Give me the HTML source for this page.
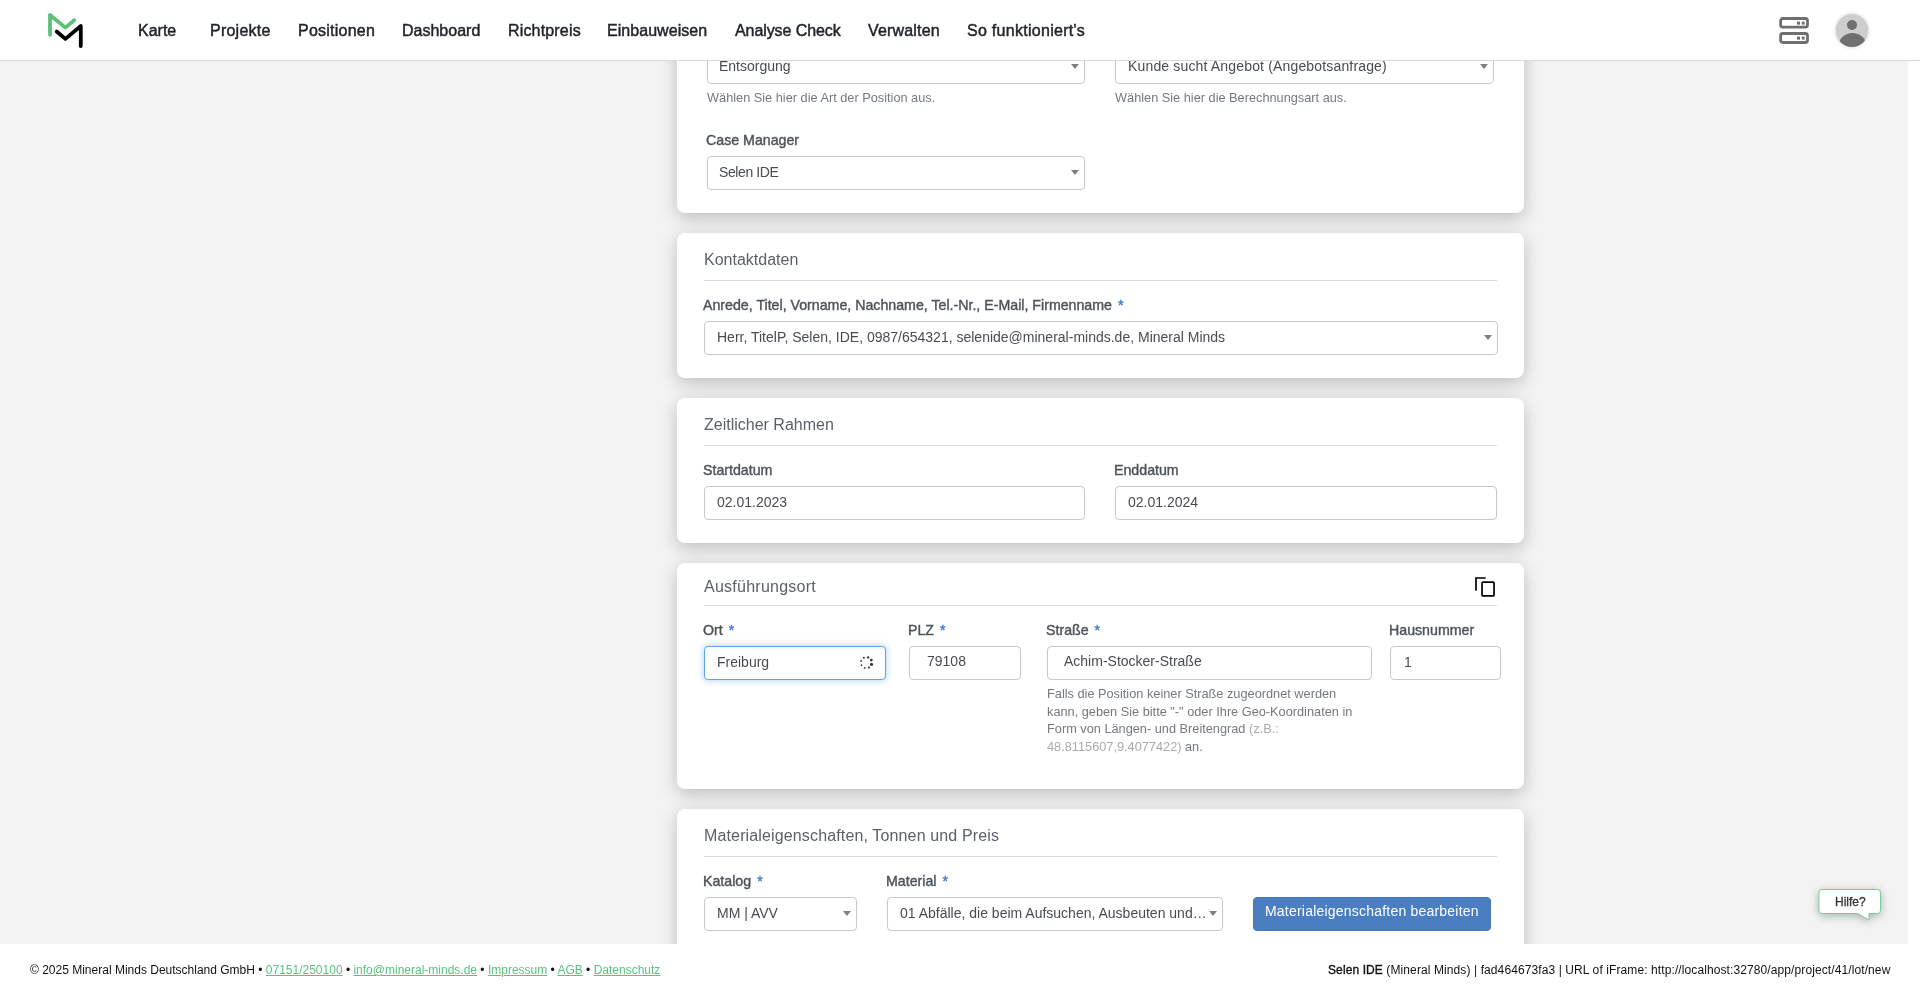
<!DOCTYPE html>
<html><head><meta charset="utf-8">
<style>
*{box-sizing:border-box;margin:0;padding:0}
html,body{width:1920px;height:994px;overflow:hidden;background:#fff;font-family:"Liberation Sans",sans-serif}
.abs{position:absolute}
#bg{position:absolute;left:0;top:61px;width:1908px;height:883px;background:#f3f3f3}
#nav{position:absolute;left:0;top:0;width:1920px;height:61px;background:#fff;border-bottom:1px solid #d9d9d9;z-index:5}
.nl{position:absolute;top:21px;font-size:16px;color:#212529;-webkit-text-stroke:0.45px #212529;white-space:nowrap;line-height:19px}
.card{position:absolute;left:677px;width:847px;background:#fff;border-radius:8px;box-shadow:0 5px 18px rgba(0,0,0,0.22)}
.hd{position:absolute;font-size:16px;color:#5b6168;white-space:nowrap;line-height:19px}
.hr{position:absolute;height:1px;background:#dcdcdc}
.lb{position:absolute;font-size:14.2px;color:#4d535a;-webkit-text-stroke:0.4px #4d535a;white-space:nowrap;line-height:17px}
.req{color:#3d7bd1;-webkit-text-stroke:0.4px #3d7bd1;margin-left:6px}
.in{position:absolute;height:34px;border:1px solid #c8c8c8;border-radius:4px;background:#fff}
.tx{position:absolute;font-size:14px;color:#484c51;white-space:nowrap;line-height:17px}
.arr{position:absolute;width:0;height:0;border-left:4px solid transparent;border-right:4px solid transparent;border-top:5px solid #808080}
.help{position:absolute;font-size:12.75px;color:#74797f;white-space:nowrap;line-height:17px}
#foot{position:absolute;left:0;top:944px;width:1920px;height:50px;background:#fff;z-index:5}
.ft{position:absolute;top:963px;font-size:12px;color:#111;white-space:nowrap;line-height:14px;z-index:6}
.ft a{color:#5fbf7f;text-decoration:underline}
.nl,.hd,.lb,.tx,.help,.ft{will-change:transform}</style></head>
<body>
<div id="bg"></div>

<!-- card 1 -->
<div class="card" style="top:-150px;height:363px"></div>
<div class="in" style="left:707px;top:50px;width:378px"></div>
<div class="tx" style="left:719px;top:58px">Entsorgung</div>
<div class="arr" style="left:1071px;top:64px"></div>
<div class="help" style="left:707px;top:89px">Wählen Sie hier die Art der Position aus.</div>
<div class="in" style="left:1115px;top:50px;width:379px"></div>
<div class="tx" style="left:1128px;top:58px;letter-spacing:0.16px">Kunde sucht Angebot (Angebotsanfrage)</div>
<div class="arr" style="left:1480px;top:64px"></div>
<div class="help" style="left:1115px;top:89px">Wählen Sie hier die Berechnungsart aus.</div>
<div class="lb" style="left:706.3px;top:132px">Case Manager</div>
<div class="in" style="left:707px;top:156px;width:378px"></div>
<div class="tx" style="left:719px;top:164px;letter-spacing:-0.4px">Selen IDE</div>
<div class="arr" style="left:1071px;top:170px"></div>

<!-- card 2 -->
<div class="card" style="top:233px;height:145px"></div>
<div class="hd" style="left:704px;top:250px">Kontaktdaten</div>
<div class="hr" style="left:704px;top:280px;width:793px"></div>
<div class="lb" style="left:703.3px;top:297px">Anrede, Titel, Vorname, Nachname, Tel.-Nr., E-Mail, Firmenname<span class="req">*</span></div>
<div class="in" style="left:704px;top:321px;width:794px;height:34px"></div>
<div class="tx" style="left:717px;top:329px">Herr, TitelP, Selen, IDE, 0987/654321, selenide@mineral-minds.de, Mineral Minds</div>
<div class="arr" style="left:1484px;top:335px"></div>

<!-- card 3 -->
<div class="card" style="top:398px;height:145px"></div>
<div class="hd" style="left:704px;top:415px">Zeitlicher Rahmen</div>
<div class="hr" style="left:704px;top:445px;width:793px"></div>
<div class="lb" style="left:703.3px;top:462px">Startdatum</div>
<div class="lb" style="left:1114.3px;top:462px">Enddatum</div>
<div class="in" style="left:704px;top:486px;width:381px"></div>
<div class="tx" style="left:717px;top:494px">02.01.2023</div>
<div class="in" style="left:1115px;top:486px;width:382px"></div>
<div class="tx" style="left:1128px;top:494px">02.01.2024</div>

<!-- card 4 -->
<div class="card" style="top:563px;height:226px"></div>
<div class="hd" style="left:704px;top:577px;letter-spacing:0.25px">Ausführungsort</div>
<svg class="abs" style="left:1474px;top:576px" width="22" height="22" viewBox="0 0 22 22">
  <path d="M2 14 V2 H11" fill="none" stroke="#000" stroke-width="1.7" stroke-linecap="round" stroke-linejoin="miter"/>
  <rect x="8.05" y="6.05" width="12" height="13.9" fill="none" stroke="#000" stroke-width="1.7" rx="1"/>
</svg>
<div class="hr" style="left:704px;top:605px;width:793px"></div>
<div class="lb" style="left:703.3px;top:622px">Ort<span class="req">*</span></div>
<div class="lb" style="left:908.3px;top:622px">PLZ<span class="req">*</span></div>
<div class="lb" style="left:1046.3px;top:622px">Straße<span class="req">*</span></div>
<div class="lb" style="left:1389.3px;top:622px">Hausnummer</div>
<div class="in" style="left:704px;top:646px;width:182px;border-color:#5fa2e8;box-shadow:0 0 6px 1px rgba(102,170,233,0.45)"></div>
<div class="tx" style="left:717px;top:654px">Freiburg</div>
<svg class="abs" style="left:859px;top:656px" width="15" height="15" viewBox="0 0 15 15">
  <g fill="#3a3d42">
  <circle cx="4.9" cy="1.7" r="1"/><circle cx="9.1" cy="1.4" r="1.2"/><circle cx="12.3" cy="4.1" r="1.45"/><circle cx="12.5" cy="8.4" r="1.6"/>
  <circle cx="9.9" cy="11.6" r="1.1"/><circle cx="5.7" cy="11.9" r="0.95"/><circle cx="2.5" cy="9.2" r="0.85"/><circle cx="2.1" cy="5" r="0.9"/>
  </g>
</svg>
<div class="in" style="left:909px;top:646px;width:112px"></div>
<div class="tx" style="left:927px;top:653px">79108</div>
<div class="in" style="left:1047px;top:646px;width:325px"></div>
<div class="tx" style="left:1064px;top:653px">Achim-Stocker-Straße</div>
<div class="in" style="left:1390px;top:646px;width:111px"></div>
<div class="tx" style="left:1404px;top:654px">1</div>
<div class="help" style="left:1047px;top:685px;line-height:17.7px;white-space:normal;width:320px">Falls die Position keiner Straße zugeordnet werden kann, geben Sie bitte "-" oder Ihre Geo-Koordinaten in Form von Längen- und Breitengrad <span style="color:#aaa">(z.B.: 48.8115607,9.4077422)</span> an.</div>

<!-- card 5 -->
<div class="card" style="top:809px;height:300px"></div>
<div class="hd" style="left:704px;top:826px;letter-spacing:0.14px">Materialeigenschaften, Tonnen und Preis</div>
<div class="hr" style="left:704px;top:856px;width:793px"></div>
<div class="lb" style="left:703.3px;top:873px">Katalog<span class="req">*</span></div>
<div class="lb" style="left:886.3px;top:873px">Material<span class="req">*</span></div>
<div class="in" style="left:704px;top:897px;width:153px"></div>
<div class="tx" style="left:717px;top:905px">MM | AVV</div>
<div class="arr" style="left:843px;top:911px"></div>
<div class="in" style="left:887px;top:897px;width:336px"></div>
<div class="tx" style="left:900px;top:905px">01 Abfälle, die beim Aufsuchen, Ausbeuten und…</div>
<div class="arr" style="left:1209px;top:911px"></div>
<div class="abs" style="left:1253px;top:897px;width:238px;height:34px;background:#4a7ec0;border:1px solid #4576b8;border-radius:4px"></div>
<div class="tx" style="left:1264.5px;top:903px;color:#fff;letter-spacing:0.21px">Materialeigenschaften bearbeiten</div>

<!-- help bubble -->
<svg class="abs" style="left:1812px;top:882px;filter:drop-shadow(0 2px 4px rgba(0,0,0,0.28))" width="80" height="50" viewBox="0 0 80 50">
  <path d="M10 7.5 H65.6 Q68.5 7.5 68.5 10.5 V28.5 Q68.5 31.5 65.5 31.5 H57 V38 L45.7 31.5 H10 Q7 31.5 7 28.5 V10.5 Q7 7.5 10 7.5 Z" fill="#fff" stroke="#7ccc96" stroke-width="1"/>
</svg>
<div class="tx" style="left:1834.5px;top:895px;font-size:12px;line-height:14px;color:#333;-webkit-text-stroke:0.3px #333">Hilfe?</div>

<div id="nav">
  <svg class="abs" style="left:46px;top:12px" width="40" height="38" viewBox="0 0 40 38">
    <polyline points="4,22.8 4,3 19.4,15.6 28.2,8.3" fill="none" stroke="#5cbf7a" stroke-width="3.8" stroke-linecap="round" stroke-linejoin="round"/>
    <polyline points="10.7,19.5 19.4,26.9 34.8,14 34.8,34" fill="none" stroke="#000" stroke-width="3.8" stroke-linecap="round" stroke-linejoin="round"/>
  </svg>
  <div class="nl" style="left:138px">Karte</div>
  <div class="nl" style="left:210px;letter-spacing:0.24px">Projekte</div>
  <div class="nl" style="left:298px;letter-spacing:0.24px">Positionen</div>
  <div class="nl" style="left:402px">Dashboard</div>
  <div class="nl" style="left:508px;letter-spacing:0.17px">Richtpreis</div>
  <div class="nl" style="left:607px;letter-spacing:0.05px">Einbauweisen</div>
  <div class="nl" style="left:735px;letter-spacing:-0.08px">Analyse Check</div>
  <div class="nl" style="left:868px;letter-spacing:0.17px">Verwalten</div>
  <div class="nl" style="left:967px;letter-spacing:0.28px">So funktioniert's</div>
  <svg class="abs" style="left:1778px;top:16px" width="32" height="30" viewBox="0 0 32 30">
    <rect x="2.6" y="2.5" width="26.9" height="8.7" rx="2.2" fill="none" stroke="#6f6f6f" stroke-width="2.8"/>
    <rect x="2.6" y="17.5" width="26.9" height="9" rx="2.2" fill="none" stroke="#6f6f6f" stroke-width="2.8"/>
    <rect x="19" y="5.6" width="3" height="3" fill="#6f6f6f"/><rect x="23.8" y="5.6" width="2.9" height="3" fill="#6f6f6f"/>
    <rect x="19" y="20.6" width="3" height="3" fill="#6f6f6f"/><rect x="23.8" y="20.6" width="2.9" height="3" fill="#6f6f6f"/>
  </svg>
  <div class="abs" style="left:1835.8px;top:13.6px;width:32.6px;height:33px;border-radius:50%;background:#cdcdcd;box-shadow:0 0 4px rgba(0,0,0,0.2);overflow:hidden">
    <div class="abs" style="left:11.1px;top:6.1px;width:10.2px;height:10.2px;border-radius:50%;background:#6f6f6f"></div>
    <div class="abs" style="left:2.8px;top:19.2px;width:27px;height:24px;border-radius:50%;background:#6f6f6f"></div>
  </div>
</div>

<div id="foot"></div>
<div class="ft" style="left:30px">© 2025 Mineral Minds Deutschland GmbH • <a>07151/250100</a> • <a>info@mineral-minds.de</a> • <a>Impressum</a> • <a>AGB</a> • <a>Datenschutz</a></div>
<div class="ft" style="left:1328px;letter-spacing:0.1px"><b style="font-weight:normal;-webkit-text-stroke:0.35px #111">Selen IDE</b> (Mineral Minds) | fad464673fa3 | URL of iFrame: http://localhost:32780/app/project/41/lot/new</div>
</body></html>
